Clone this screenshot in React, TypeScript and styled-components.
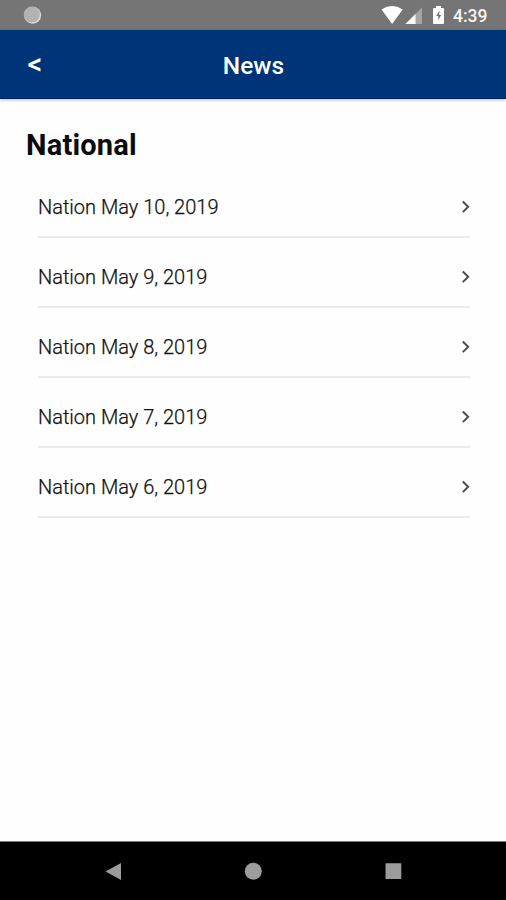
import React from "react";
import styled, { createGlobalStyle } from "styled-components";

const GlobalStyle = createGlobalStyle`
  * { box-sizing: border-box; }
  body { margin: 0; background: #fff; font-family: Roboto, sans-serif; }
`;

const Screen = styled.div`
  display: flex;
  flex-direction: column;
  width: 100%;
  height: 900px;
  background: #fefefe;
  overflow: hidden;
`;

const StatusBar = styled.div`
  display: flex;
  flex: none;
  align-items: center;
  justify-content: space-between;
  height: 30px;
  padding: 0 18px 0 22px;
  background: #757575;
`;

const StatusIcons = styled.div`
  display: flex;
  align-items: center;
`;

const Clock = styled.span`
  width: 35px;
  margin-left: 9px;
  padding-top: 2px;
  color: #f5f5f5;
  font-size: 17.5px;
  font-weight: 500;
  line-height: 28px;
  white-space: nowrap;
`;

const Header = styled.header`
  display: grid;
  flex: none;
  grid-template-columns: 70px 1fr 70px;
  align-items: center;
  height: 69px;
  border-bottom: 1px solid #001f63;
  background: #003478;
  box-shadow: 0 1px 3px rgba(60, 50, 70, 0.35);
  color: #fff;
`;

const BackButton = styled.button`
  padding: 0;
  border: 0;
  background: none;
  color: inherit;
  font: 500 29px/32px Roboto, sans-serif;
`;

const Title = styled.h1`
  margin: 0;
  padding: 4px 0 0 1px;
  font-size: 24.5px;
  font-weight: 500;
  line-height: 30px;
  text-align: center;
`;

const Content = styled.main`
  flex: 1;
  padding: 29px 36px 0 26px;
`;

const SectionTitle = styled.h2`
  margin: 0;
  color: #0c0c0c;
  font-size: 29px;
  font-weight: 700;
  letter-spacing: 0.2px;
  line-height: 34px;
`;

const List = styled.ul`
  margin: 6px 0 0;
  padding: 0 0 0 12px;
  list-style: none;
`;

const Row = styled.li`
  display: flex;
  align-items: center;
  justify-content: space-between;
  height: 70px;
  padding-top: 9px;
  border-bottom: 2px solid #ececec;
`;

const RowLabel = styled.span`
  color: #111;
  font-size: 20px;
  font-weight: 300;
  line-height: 24px;
  -webkit-text-stroke: 0.25px #111;
`;

const NavBar = styled.nav`
  display: flex;
  flex: none;
  align-items: center;
  justify-content: space-around;
  height: 59px;
  padding: 0 43px;
  border-top: 1px solid #777;
  background: #000;
`;

const days = [10, 9, 8, 7, 6];

export default function App() {
  return (
    <Screen>
      <GlobalStyle />
      <StatusBar>
        <svg width="20" height="20" viewBox="0 0 20 20">
          <circle cx="10.6" cy="10.3" r="8.5" fill="#dedede" />
          <circle cx="9.8" cy="9.6" r="8" fill="#b2b2b2" />
        </svg>
        <StatusIcons>
          <svg width="71" height="30" viewBox="0 0 71 30" fill="#fff">
            <path d="M8.5 9.5Q19 2.7 29.7 9.5L19.1 24Z" />
            <path d="M49 7.5V24H32.5Z" fill="#a6a6a6" />
            <path d="M42.5 14V24H32.5Z" />
            <path d="M61 8h2V6h5v2h2q1 0 1 1v14q0 1-1 1h-9q-1 0-1-1V9q0-1 1-1Z" />
            <path d="m66.5 10.5-3.3 5.6h2v4.2l3-5.2h-1.9Z" fill="#777" />
          </svg>
          <Clock>4:39</Clock>
        </StatusIcons>
      </StatusBar>
      <Header>
        <BackButton>&lt;</BackButton>
        <Title>News</Title>
      </Header>
      <Content>
        <SectionTitle>National</SectionTitle>
        <List>
          {days.map((day) => (
            <Row key={day}>
              <RowLabel>Nation May {day}, 2019</RowLabel>
              <svg width="9" height="14" viewBox="0 0 9 14">
                <path d="m1.8 1.5 5.4 5.3-5.4 5.3" fill="none" stroke="#4a4a4a" strokeWidth="1.9" />
              </svg>
            </Row>
          ))}
        </List>
      </Content>
      <NavBar>
        <svg width="18" height="20" viewBox="0 0 18 20">
          <path d="M1.5 10.5 17 2v17Z" fill="#9c9c9c" />
        </svg>
        <svg width="18" height="20" viewBox="0 0 18 20">
          <circle cx="9.3" cy="10.2" r="8.5" fill="#9c9c9c" />
        </svg>
        <svg width="18" height="20" viewBox="0 0 18 20">
          <rect x="1.5" y="2.3" width="15.8" height="15.8" rx="0.5" fill="#9c9c9c" />
        </svg>
      </NavBar>
    </Screen>
  );
}
